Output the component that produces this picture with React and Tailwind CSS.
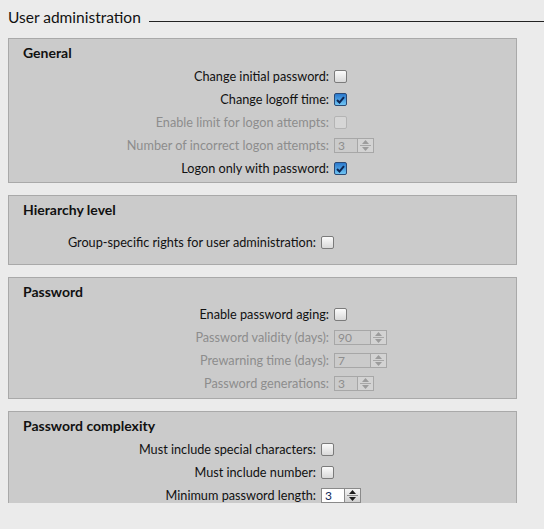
import { useState } from 'react';

const Checkbox = ({ checked, disabled, onChange }) => {
  let box = 'border-[#7b7b7b] bg-gradient-to-b from-[#fbfbfb] to-[#d9d9d9]';
  if (disabled) box = 'border-[#b4b4b4] bg-[#d6d6d6]';
  else if (checked) box = 'border-[#2b4a75] bg-gradient-to-b from-[#2a78cc] to-[#6fc4f3]';

  return (
    <button
      type="button"
      onClick={disabled ? undefined : onChange}
      className={`w-[13px] h-[13px] rounded-[2px] border flex items-center justify-center p-0 ${box}`}
    >
      {checked && (
        <svg width="9" height="8" viewBox="0 0 9 8">
          <path d="M1 4 L3.5 6.5 L8 1.2" fill="none" stroke="#0b2656" strokeWidth="2" />
        </svg>
      )}
    </button>
  );
};

const Spinner = ({ value, disabled, wide }) => {
  const arrow = disabled ? '#9c9c9c' : '#1a1a1a';
  return (
    <div className="flex h-[15px]">
      <div
        className={`${wide ? 'w-[37px]' : 'w-[24px]'} h-full border flex items-center pl-[3px] text-[12px] leading-none ${
          disabled ? 'border-[#a7a7a7] bg-[#cbcbcb] text-[#8e8e8e]' : 'border-[#8a8a8a] bg-white text-[#102a5c]'
        }`}
      >
        {value}
      </div>
      <div
        className={`w-[16px] h-full border border-l-0 flex flex-col ${
          disabled ? 'border-[#a7a7a7] bg-[#d3d3d3]' : 'border-[#8a8a8a] bg-gradient-to-b from-[#f4f4f4] to-[#cfcfcf]'
        }`}
      >
        <div className="flex-1 flex items-center justify-center">
          <svg width="7" height="4" viewBox="0 0 7 4"><path d="M0 4 L3.5 0 L7 4 Z" fill={arrow} /></svg>
        </div>
        <div className={`h-px mx-[2px] ${disabled ? 'bg-[#a7a7a7]' : 'bg-[#8a8a8a]'}`} />
        <div className="flex-1 flex items-center justify-center">
          <svg width="7" height="4" viewBox="0 0 7 4"><path d="M0 0 L3.5 4 L7 0 Z" fill={arrow} /></svg>
        </div>
      </div>
    </div>
  );
};

const Row = ({ label, disabled, labelWidth, children }) => (
  <div className="flex items-center h-[23px]">
    <div
      className={`${labelWidth} text-right pr-[5px] text-[12.7px] whitespace-nowrap ${
        disabled ? 'text-[#8d8d8d]' : 'text-[#111111]'
      }`}
    >
      {label}
    </div>
    {children}
  </div>
);

const Panel = ({ title, children, extra }) => (
  <div className={`bg-[#cbcbcb] border border-[#a9a9a9] pl-[14px] pt-[4px] ${extra || 'pb-[2px]'}`}>
    <div className="text-[14px] font-bold leading-[20px] text-[#111111]">{title}</div>
    {children}
  </div>
);

const App = () => {
  const [general, setGeneral] = useState({ initial: false, logoff: true, onlyPwd: true });
  const [groupRights, setGroupRights] = useState(false);
  const [aging, setAging] = useState(false);
  const [special, setSpecial] = useState(false);
  const [number, setNumber] = useState(false);

  const toggle = (key) => setGeneral({ ...general, [key]: !general[key] });

  return (
    <div
      className="w-[544px] h-[529px] bg-[#ebebeb] overflow-hidden"
      style={{ fontFamily: 'Lato, "Liberation Sans", sans-serif' }}
    >
      {/* Section title */}
      <div className="flex items-end h-[28px] pl-[8px]">
        <span className="text-[15.5px] leading-[22px] text-[#111111]">User administration</span>
        <div className="flex-1 h-px bg-[#222222] ml-[8px] mb-[6px]" />
      </div>

      <div className="h-[475px] overflow-hidden pl-[8px] pr-[27px] pt-[10px] flex flex-col gap-[12px]">
        <Panel title="General">
          <div className="mt-[2px]">
            <Row label="Change initial password:" labelWidth="w-[311px]">
              <Checkbox checked={general.initial} onChange={() => toggle('initial')} />
            </Row>
            <Row label="Change logoff time:" labelWidth="w-[311px]">
              <Checkbox checked={general.logoff} onChange={() => toggle('logoff')} />
            </Row>
            <Row label="Enable limit for logon attempts:" labelWidth="w-[311px]" disabled>
              <Checkbox disabled />
            </Row>
            <Row label="Number of incorrect logon attempts:" labelWidth="w-[311px]" disabled>
              <Spinner value="3" disabled />
            </Row>
            <Row label="Logon only with password:" labelWidth="w-[311px]">
              <Checkbox checked={general.onlyPwd} onChange={() => toggle('onlyPwd')} />
            </Row>
          </div>
        </Panel>

        <Panel title="Hierarchy level" extra="pb-[10px]">
          <div className="mt-[11px]">
            <Row label="Group-specific rights for user administration:" labelWidth="w-[298px]">
              <Checkbox checked={groupRights} onChange={() => setGroupRights(!groupRights)} />
            </Row>
          </div>
        </Panel>

        <Panel title="Password" extra="pb-[3px]">
          <div className="mt-[1px]">
            <Row label="Enable password aging:" labelWidth="w-[311px]">
              <Checkbox checked={aging} onChange={() => setAging(!aging)} />
            </Row>
            <Row label="Password validity (days):" labelWidth="w-[311px]" disabled>
              <Spinner value="90" disabled wide />
            </Row>
            <Row label="Prewarning time (days):" labelWidth="w-[311px]" disabled>
              <Spinner value="7" disabled wide />
            </Row>
            <Row label="Password generations:" labelWidth="w-[311px]" disabled>
              <Spinner value="3" disabled />
            </Row>
          </div>
        </Panel>

        <Panel title="Password complexity">
          <div className="mt-[2px]">
            <Row label="Must include special characters:" labelWidth="w-[298px]">
              <Checkbox checked={special} onChange={() => setSpecial(!special)} />
            </Row>
            <Row label="Must include number:" labelWidth="w-[298px]">
              <Checkbox checked={number} onChange={() => setNumber(!number)} />
            </Row>
            <Row label="Minimum password length:" labelWidth="w-[298px]">
              <Spinner value="3" />
            </Row>
          </div>
        </Panel>
      </div>
    </div>
  );
};

export default App;
